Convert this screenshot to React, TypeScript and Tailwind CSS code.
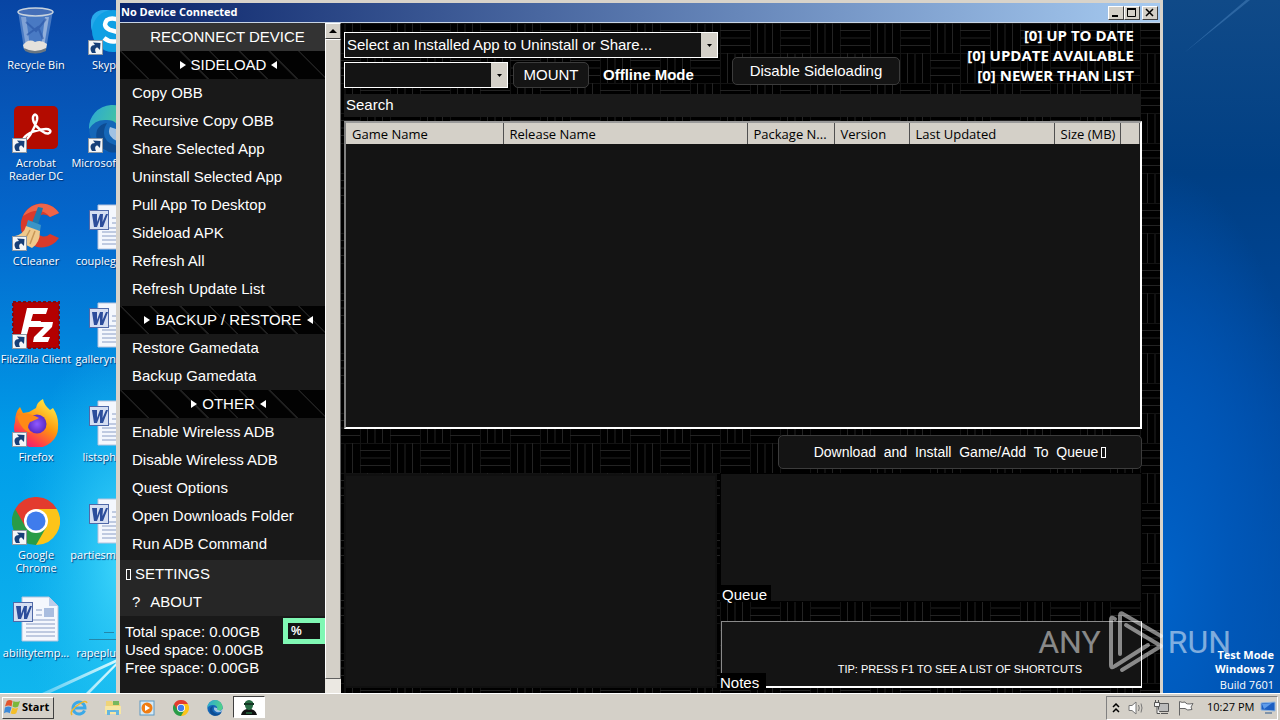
import type { ReactNode } from "react";

const ui = "font-['Liberation_Sans',Arial,sans-serif]";
const tahoma = "font-['Open_Sans','Noto_Sans',sans-serif]";

function Shortcut() {
  return (
    <g>
      <rect x="0.5" y="33.5" width="14" height="14" fill="#f4f6f8" stroke="#8d97a3" />
      <path d="M4 46 C1 41 3 38 7 38 L5 35.500 L12.500 36 L12 43 L9.500 40.500 C7 40.500 6.500 43 8 46 Z" fill="#173f78" />
    </g>
  );
}

function RecycleBin() {
  return (
    <svg viewBox="0 0 48 48" className="h-12 w-12 shrink-0">
      <path d="M6 4 L12 42 Q24 48 34 42 L41 4 Z" fill="#7fa3d8" fillOpacity="0.55" />
      <path d="M9 10 L14 40 L18 40 L14 10 Z" fill="#fff" fillOpacity="0.3" />
      <path d="M37 10 L32 40 L29 41 L33 10 Z" fill="#fff" fillOpacity="0.4" />
      <path d="M14 15 L24 24 L34 12 M15 28 L26 20 L31 32" stroke="#2853a5" strokeWidth="2" fill="none" opacity="0.6" />
      <path d="M11 38 Q17 31 23 35 Q29 32 35 37 L34 42 Q24 48 12 42 Z" fill="#e5e1dc" />
      <path d="M12 41 Q23 47 34 41 L34 44 Q23 49 13 44 Z" fill="#697682" />
      <ellipse cx="23.500" cy="5" rx="17.500" ry="4" fill="#456fb8" stroke="#c8d3de" strokeWidth="1.500" />
    </svg>
  );
}

function Acrobat() {
  return (
    <svg viewBox="0 0 48 48" className="h-12 w-12 shrink-0">
      <rect x="2" y="1" width="44" height="43" rx="5" fill="#b30b00" />
      <path
        d="M12 33 C15 28 26 24 34 24 C41 24 39 30 33 28 C27 25 20 18 21 12 C22 8 26 9 25 15 C23 22 17 34 13 35 C11 36 11 34 12 33"
        fill="none"
        stroke="#fff"
        strokeWidth="2.500"
        strokeLinecap="round"
      />
      <Shortcut />
    </svg>
  );
}

function CCleaner() {
  return (
    <svg viewBox="0 0 48 48" className="h-12 w-12 shrink-0">
      <path d="M47 10 A21 22 0 1 0 47 35 L38 31 A10 11 0 1 1 38 14 Z" fill="#d93a2b" />
      <path d="M47 10 A21 22 0 0 0 11 13 Q28 2 38 14 Z" fill="#ee6549" />
      <path d="M26 4 L31 5 L26 22 L20 20 Z" fill="#1e78ad" />
      <path d="M16 17 L29 22 L28 28 L14 24 Z" fill="#3a94c7" />
      <path d="M14 23 L28 28 Q28 40 20 45 Q9 40 3 33 Q12 31 14 23 Z" fill="#efc98c" />
      <path d="M18 27 L12 38 M23 28 L18 41" stroke="#c89757" strokeWidth="1.500" />
      <Shortcut />
    </svg>
  );
}

function FileZilla() {
  return (
    <svg viewBox="0 0 48 48" className="h-12 w-12 shrink-0">
      <rect x="1" y="1" width="46" height="46" fill="#b40000" stroke="#7c0b16" strokeWidth="2" strokeDasharray="3 2" />
      <path d="M15 7 H36 L34 13 H21 L19 20 H29 L27 26 H17 L14 37 H8 Z" fill="#fff" />
      <path d="M26 21 H41 L40 26 L30 36 H38 L36 41 H21 L22 36 L32 26 H25 Z" fill="#fff" />
      <Shortcut />
    </svg>
  );
}

function Firefox() {
  return (
    <svg viewBox="0 0 48 48" className="h-12 w-12 shrink-0">
      <defs>
        <linearGradient id="fox" x1="0.8" y1="0" x2="0.2" y2="1">
          <stop offset="0" stopColor="#fff04a" />
          <stop offset="0.45" stopColor="#ff980e" />
          <stop offset="0.8" stopColor="#ff3750" />
          <stop offset="1" stopColor="#e31587" />
        </linearGradient>
        <radialGradient id="globe">
          <stop offset="0" stopColor="#9059ff" />
          <stop offset="1" stopColor="#5b2bc4" />
        </radialGradient>
      </defs>
      <path d="M8 8 L11 14 L17 13 L24 9 Q25 3 31 0 Q32 6 38 11 L41 9 Q47 18 46 28 A22 20 0 1 1 3 23 Q3 13 8 8 Z" fill="url(#fox)" />
      <circle cx="25" cy="25" r="9.500" fill="url(#globe)" />
      <path d="M5 17 Q13 12 23 17 L27 19 Q21 22 18 23 Q13 30 20 34 Q9 32 5 17 Z" fill="#ff8a16" />
      <Shortcut />
    </svg>
  );
}

function ChromeWheel() {
  return (
    <g>
      <path d="M24 24 L3.200 12 A24 24 0 0 1 44.800 12 Z" fill="#e33b2e" />
      <path d="M24 24 L44.800 12 A24 24 0 0 1 24 48 Z" fill="#fcc419" />
      <path d="M24 24 L24 48 A24 24 0 0 1 3.200 12 Z" fill="#299c47" />
      <path d="M24 12 H44.800 L35 30 Z" fill="#fcc419" />
      <path d="M34.400 30 L24 48 L14 30 Z" fill="#299c47" />
      <path d="M13.600 30 L3.200 12 L24 12 Z" fill="#e33b2e" />
      <circle cx="24" cy="24" r="12" fill="#fff" />
      <circle cx="24" cy="24" r="9.500" fill="#3f7cec" />
    </g>
  );
}

function Chrome() {
  return (
    <svg viewBox="0 0 48 48" className="h-12 w-12 shrink-0">
      <ChromeWheel />
      <Shortcut />
    </svg>
  );
}

function WordDoc() {
  return (
    <svg viewBox="0 0 48 48" className="h-12 w-12 shrink-0">
      <path d="M10 2 H37 L46 11 V46 H10 Z" fill="#f4f7fd" stroke="#b6c3dc" />
      <path d="M37 2 V11 H46 Z" fill="#bccdea" />
      <path d="M24 15 H30 M24 20 H30 M14 25 H43 M14 29 H43 M14 33 H43 M14 37 H43 M14 41 H43" stroke="#8a9dc4" />
      <rect x="32" y="13" width="10" height="9" fill="#a9bddf" />
      <rect x="1.500" y="7.500" width="19" height="19" fill="#d5def2" stroke="#5069a8" />
      <path d="M4 11 H9 L9 19 L12 11 H15 L14.500 19 L18 11 H20 L15 24 H12 L12 16 L9 24 H6 Z" fill="#2c4d9b" />
    </svg>
  );
}

function Skype() {
  return (
    <svg viewBox="0 0 48 48" className="h-12 w-12 shrink-0">
      <rect x="3" y="3" width="28" height="28" rx="12" fill="#28a8ea" />
      <circle cx="25" cy="24" r="21" fill="#0fa0e4" />
      <path d="M34 15 Q25 9 19 13 Q14 19 22 23 L29 25 Q37 30 29 34 Q22 36 16 31" fill="none" stroke="#fff" strokeWidth="4.500" />
      <Shortcut />
    </svg>
  );
}

function EdgeWave() {
  return (
    <g>
      <defs>
        <linearGradient id="edge" x1="0" y1="0" x2="1" y2="0.3">
          <stop offset="0" stopColor="#2aa6d8" />
          <stop offset="1" stopColor="#4fd08c" />
        </linearGradient>
      </defs>
      <circle cx="24" cy="24" r="23" fill="#1567b8" />
      <path d="M1 24 A23 23 0 0 1 47 22 Q47 32 36 32 Q28 31 31 26 Q30 15 19 15 Q7 14 1 24 Z" fill="url(#edge)" />
      <path d="M17 22 Q12 37 30 41 Q39 42 44 36 Q36 50 21 47 Q5 40 9 25 Q12 19 19 18 Z" fill="#0d4c93" />
      <path d="M22 22 Q18 31 29 36 Q38 38 45 34 L48 27 L40 32 Q27 31 31 25 Z" fill="#fff" fillOpacity="0.6" />
    </g>
  );
}

function Edge() {
  return (
    <svg viewBox="0 0 48 48" className="h-12 w-12 shrink-0">
      <EdgeWave />
      <Shortcut />
    </svg>
  );
}

function Blank() {
  return (
    <svg viewBox="0 0 48 48" className="h-12 w-12 shrink-0">
      <path d="M1 44.500 H47 M16 37.500 H26" stroke="#2387aa" />
    </svg>
  );
}

const labelText = "mt-[3px] text-[11px] leading-[13px] text-white [text-shadow:1px_1px_1px_#003070]";

function DesktopIcon({ icon, label }: { icon: ReactNode; label: string }) {
  return (
    <button className="flex h-[98px] w-[72px] flex-col items-center">
      {icon}
      <span className={`w-full text-center whitespace-pre-line ${labelText}`}>{label}</span>
    </button>
  );
}

/* Icons that run under the window: only their left part is on view. */
function CoveredIcon({ icon, label }: { icon: ReactNode; label: string }) {
  return (
    <button className="flex h-[98px] w-full flex-col items-end">
      <span className="flex h-12 w-7 overflow-hidden">{icon}</span>
      <span className={`whitespace-nowrap ${labelText}`}>{label}</span>
    </button>
  );
}

function Wallpaper() {
  return (
    <div className="absolute inset-0 bg-[linear-gradient(180deg,#0845a4_0%,#0467cc_32%,#009de9_64%,#10b6ee_100%)]">
      <div className="absolute inset-y-0 right-0 w-[120px] bg-[radial-gradient(ellipse_160px_420px_at_0%_85%,#0062c8_0%,#0057b8_45%,transparent_100%),linear-gradient(180deg,#104a88_0%,#003f84_25%,#0049a0_60%,#0052ae_100%)]" />
      <svg className="absolute inset-0 h-full w-full" viewBox="0 0 1280 692" preserveAspectRatio="none">
        <defs>
          <radialGradient id="glow">
            <stop offset="0" stopColor="#4be0ff" stopOpacity="0.85" />
            <stop offset="1" stopColor="#1dbdf0" stopOpacity="0" />
          </radialGradient>
          <linearGradient id="ray">
            <stop offset="0" stopColor="#fff" stopOpacity="0.3" />
            <stop offset="1" stopColor="#eaffff" stopOpacity="0.9" />
          </linearGradient>
        </defs>
        <ellipse cx="125" cy="560" rx="110" ry="230" fill="url(#glow)" />
        <path d="M42 692 L117 658 V661 L50 692 Z M86 692 L117 661 V664 L90 692 Z" fill="url(#ray)" />
        <path d="M1184 53 L1246 0 H1250 Z" fill="#5b93cc" fillOpacity="0.4" />
      </svg>
    </div>
  );
}

function Weave() {
  return (
    <svg className="absolute inset-0 h-full w-full" aria-hidden="true">
      <defs>
        <pattern id="weave" x="19" y="0" width="60" height="60" patternUnits="userSpaceOnUse">
          <rect width="60" height="60" fill="#000" />
          <path d="M0 .5 H60 M0 30.500 H60 M.5 0 V60 M30.500 0 V60" stroke="#131313" />
          <path
            d="M0 7.500 H30 M0 22.500 H30 M37.500 0 V30 M52.500 0 V30 M30 37.500 H60 M30 52.500 H60 M7.500 30 V60 M22.500 30 V60"
            stroke="#232323"
          />
          <path d="M0 15 H30 M45 0 V30 M30 45 H60 M15 30 V60" stroke="#111" strokeWidth="2" />
        </pattern>
      </defs>
      <rect width="100%" height="100%" fill="url(#weave)" />
    </svg>
  );
}

const caption =
  "flex h-[14px] w-4 items-center justify-center border border-t-white border-l-white border-r-[#404040] border-b-[#404040] bg-[#d4d0c8]";

function TitleBar() {
  return (
    <header
      className={`flex h-[19px] shrink-0 items-center bg-[linear-gradient(90deg,#0a246a,#a6caf0)] pr-[2px] pl-[1px] ${tahoma}`}
    >
      <h1 className="text-[11px] font-bold text-white">No Device Connected</h1>
      <div className="ml-auto flex">
        <button className={caption} aria-label="Minimize">
          <svg viewBox="0 0 12 10" className="h-[10px] w-3">
            <path d="M2 8 H8" stroke="#000" strokeWidth="2" />
          </svg>
        </button>
        <button className={caption} aria-label="Maximize">
          <svg viewBox="0 0 12 10" className="h-[10px] w-3">
            <path d="M1.500 1 V8.500 H9.500 V1" stroke="#000" fill="none" />
            <path d="M1 1 H10" stroke="#000" strokeWidth="2" />
          </svg>
        </button>
        <button className={`${caption} ml-[2px]`} aria-label="Close">
          <svg viewBox="0 0 12 10" className="h-[10px] w-3">
            <path d="M2 1 L9 8 M9 1 L2 8" stroke="#000" strokeWidth="1.500" />
          </svg>
        </button>
      </div>
    </header>
  );
}

function Section({ title }: { title: string }) {
  return (
    <h2 className="flex h-7 items-center justify-center gap-1 bg-[repeating-linear-gradient(45deg,#020202_0px,#020202_19px,#202020_20px,#202020_21px)] pl-3 text-[15px] text-white">
      <svg viewBox="0 0 8 8" className="h-2 w-2"><path d="M1 0 L7 4 L1 8 Z" fill="#fff" /></svg>
      {title}
      <svg viewBox="0 0 8 8" className="h-2 w-2"><path d="M7 0 L1 4 L7 8 Z" fill="#fff" /></svg>
    </h2>
  );
}

function Items({ items }: { items: string[] }) {
  return (
    <ul>
      {items.map((t) => (
        <li key={t}>
          <button className="flex h-7 w-full items-center pt-[1px] pl-3 text-[15px] whitespace-pre text-white">{t}</button>
        </li>
      ))}
    </ul>
  );
}

function Sidebar() {
  return (
    <nav className="w-[205px] shrink-0 bg-[#191919]">
      <button className="h-7 w-full bg-[#333] pl-[10px] text-[15px] text-white">RECONNECT DEVICE</button>
      <Section title="SIDELOAD" />
      <Items
        items={[
          "Copy OBB",
          "Recursive Copy OBB",
          "Share Selected App",
          "Uninstall Selected App",
          "Pull App To Desktop",
          "Sideload APK",
          "Refresh All",
          "Refresh Update List",
        ]}
      />
      <div className="mt-[3px]"><Section title="BACKUP / RESTORE" /></div>
      <Items items={["Restore Gamedata", "Backup Gamedata"]} />
      <Section title="OTHER" />
      <Items
        items={["Enable Wireless ADB", "Disable Wireless ADB", "Quest Options", "Open Downloads Folder", "Run ADB Command"]}
      />
      <div className="mt-[2px] bg-[#262626] text-[15px] text-white">
        <button className="flex h-7 w-full items-center gap-1 pt-[1px] pl-[6px]">
          <span className="h-[11px] w-[5px] border border-white" />
          SETTINGS
        </button>
        <button className="flex h-7 w-full items-center gap-[10px] pt-[1px] pl-3">
          <span>?</span>ABOUT
        </button>
      </div>
      <div className="flex justify-between pt-[2px] text-[15px] leading-[18px] text-white">
        <div className="pt-[5px] pl-[5px]">
          <p>Total space: 0.00GB</p>
          <p>Used space: 0.00GB</p>
          <p>Free space: 0.00GB</p>
        </div>
        <div className="h-[26px] w-[42px] border-[5px] border-[#80f8b4] bg-[#141414] pl-[3px] text-[12px] leading-4 font-bold">
          %
        </div>
      </div>
    </nav>
  );
}

function ScrollBar() {
  return (
    <div className="flex w-4 shrink-0 flex-col bg-[#ebe8e2]">
      <button
        aria-label="Scroll up"
        className="flex h-4 items-center justify-center border border-t-white border-l-white border-r-[#404040] border-b-[#404040] bg-[#d4d0c8]"
      >
        <svg viewBox="0 0 8 4" className="h-1 w-2"><path d="M4 0 L8 4 H0 Z" fill="#000" /></svg>
      </button>
      <div className="flex-1 border border-t-white border-l-white border-r-[#606060] border-b-[#606060] bg-[#d4d0c8]" />
      <div className="h-[14px]" />
    </div>
  );
}

function Combo({ label, value }: { label: string; value: string }) {
  return (
    <div className="relative h-[26px] min-w-0 flex-1 border border-white bg-[#141414]">
      <select aria-label={label} className="h-full w-full appearance-none bg-transparent pl-[2px] text-[15px] text-white outline-none">
        <option>{value}</option>
      </select>
      <span className="pointer-events-none absolute inset-y-0 right-0 flex w-4 items-center justify-center bg-[#d4d0c8]">
        <svg viewBox="0 0 5 3" className="h-[3px] w-[5px]"><path d="M0 0 H5 L2.500 3 Z" fill="#000" /></svg>
      </span>
    </div>
  );
}

const darkButton = "rounded-[5px] border border-[#3c3c3c] bg-[#141414] text-white";

const columns: [string, string][] = [
  ["Game Name", "w-[157px]"],
  ["Release Name", "w-[244px]"],
  ["Package N...", "w-[87px]"],
  ["Version", "w-[75px]"],
  ["Last Updated", "w-[145px]"],
  ["Size (MB)", "w-[66px]"],
  ["", ""],
];

function GameList() {
  return (
    <div className="mt-1 min-h-[100px] flex-1 border-2 border-t-[#9a9a9a] border-l-[#808080] border-r-white border-b-white bg-[#141414]">
      <table className={`w-full table-fixed border-collapse text-[13px] leading-5 text-black ${tahoma}`}>
        <thead>
          <tr>
            {columns.map(([name, width], i) => (
              <th
                key={i}
                className={`h-5 overflow-hidden border-r border-r-[#505050] bg-[#d4d0c8] pt-[1px] pb-0 pl-[6px] text-left font-normal whitespace-nowrap ${width}`}
              >
                {name}
              </th>
            ))}
          </tr>
        </thead>
      </table>
    </div>
  );
}

function Main() {
  return (
    <main className="relative min-w-0 flex-1">
      <Weave />
      <div className="relative flex h-full flex-col pt-[2px] pr-[18px] pb-[5px] pl-[3px]">
        <div className="flex h-[69px] shrink-0 items-start">
          <div className="flex w-[374px] flex-col gap-1 pt-[7px]">
            <div className="flex"><Combo label="Installed app" value="Select an Installed App to Uninstall or Share..." /></div>
            <div className="flex items-center">
              <div className="flex w-[164px]"><Combo label="Device" value="" /></div>
              <button className={`${darkButton} ml-[5px] h-[26px] w-[76px] text-[15px]`}>MOUNT</button>
              <p className="ml-[14px] text-[15px] font-bold whitespace-nowrap text-white">Offline Mode</p>
            </div>
          </div>
          <button className={`${darkButton} mt-8 ml-[14px] h-7 w-[168px] text-[15px] whitespace-nowrap`}>Disable Sideloading</button>
          <div className={`ml-auto pr-2 text-right text-[15px] leading-[20px] font-bold text-white ${tahoma}`}>
            <p>[0] UP TO DATE</p>
            <p>[0] UPDATE AVAILABLE</p>
            <p>[0] NEWER THAN LIST</p>
          </div>
        </div>
        <input
          aria-label="Search"
          placeholder="Search"
          className="mr-[1px] h-[23px] shrink-0 bg-[#191919] pb-[2px] pl-[2px] text-[15px] text-white outline-none placeholder:text-white"
        />
        <GameList />
        <button
          className={`${darkButton} mt-[6px] flex h-[34px] w-[364px] shrink-0 items-center justify-center gap-[3px] self-end text-[14px] whitespace-pre`}
        >
          Download  and  Install  Game/Add  To  Queue
          <span className="h-[11px] w-[5px] border border-white" />
        </button>
        <div className="mt-[5px] flex h-[214px] shrink-0 gap-1">
          <div className="w-[373px] border-2 border-[#101010] bg-[#141414]" />
          <div className="flex min-w-0 flex-1 flex-col">
            <section className="relative mr-[1px] h-[127px] bg-[#141414] ring-1 ring-black">
              <h2 className="absolute bottom-0 left-0 h-4 w-[50px] bg-black pl-[1px] text-[15px] leading-5 text-white">Queue</h2>
            </section>
            <section className="relative mt-5 flex-1 border border-t-[#8a8a8a] border-l-[#8a8a8a] border-r-white border-b-2 border-b-white bg-[#141414]">
              <p className="absolute right-[59px] bottom-2 text-[11px] leading-[18px] whitespace-nowrap text-white">
                TIP: PRESS F1 TO SEE A LIST OF SHORTCUTS
              </p>
              <h2 className="absolute -bottom-[4px] -left-[2px] h-[17px] w-[46px] bg-black text-[15px] leading-5 text-white">Notes</h2>
            </section>
          </div>
        </div>
      </div>
    </main>
  );
}

function Watermark() {
  return (
    <div className="pointer-events-none absolute right-[49px] bottom-5 flex items-center font-['Liberation_Sans_Narrow',Roboto,sans-serif] text-[32px] leading-[62px] text-white/50">
      <span>ANY</span>
      <svg
        viewBox="0 0 56 62"
        className="mr-1 ml-[7px] h-[62px] w-14"
        fill="none"
        stroke="#fff"
        strokeOpacity="0.5"
        strokeWidth="4"
        strokeLinejoin="round"
        strokeLinecap="round"
      >
        <path d="M7 8 Q3 5 3 9 V54 Q3 58 7 55 L40 34" />
        <path d="M53 25 L15 3 Q12 1 12 5 V43" />
        <path d="M18 14 L53 35 L14 59" />
      </svg>
      <span>RUN</span>
    </div>
  );
}

function StartFlag() {
  return (
    <svg viewBox="0 0 18 18" className="h-[17px] w-[17px]">
      <path d="M3 2 Q6 0 9 2 L8 8 Q5 6 1 8 Z" fill="#e2552d" />
      <path d="M10 2 Q13 4 17 2 L15 8 Q12 10 9 8 Z" fill="#7bb83c" />
      <path d="M1 9 Q5 7 8 9 L6 15 Q3 13 0 15 Z" fill="#3d8ad8" />
      <path d="M9 9 Q12 11 15 9 L13 15 Q10 17 7 15 Z" fill="#f4bf2a" />
    </svg>
  );
}

const quick = "flex h-6 w-[34px] items-center justify-center";

function TaskBar() {
  return (
    <footer className={`relative flex h-7 shrink-0 items-center border-t border-white bg-[#d4d0c8] pr-[2px] pl-[2px] ${tahoma}`}>
      <button className="flex h-[22px] w-[52px] items-center gap-[1px] border border-t-white border-l-white border-r-[#404040] border-b-[#404040] pl-[1px] text-[11px] font-bold text-black">
        <StartFlag />
        Start
      </button>
      <div className="ml-2 flex">
        <button className={quick} aria-label="Internet Explorer">
          <svg viewBox="0 0 18 18" className="h-[18px] w-[18px]">
            <path d="M14.500 11.500 A6 6 0 1 1 15 9 H5" fill="none" stroke="#3ba9e8" strokeWidth="3" />
            <path d="M2 16 Q-1 12 8 6 Q16 0 17 4" fill="none" stroke="#efb82c" strokeWidth="1.500" />
          </svg>
        </button>
        <button className={quick} aria-label="File Explorer">
          <svg viewBox="0 0 18 18" className="h-[18px] w-[18px]">
            <path d="M2 2 H8 L9 4 H16 V14 H2 Z" fill="#efd477" />
            <rect x="9" y="2" width="6" height="4" fill="#77b85d" />
            <path d="M1 7 H17 V15 H1 Z" fill="#f7e6a3" />
            <path d="M3 16 V11 H15 V16 H12 V13 H6 V16 Z" fill="#65b6df" />
          </svg>
        </button>
        <button className={quick} aria-label="Media Player">
          <svg viewBox="0 0 18 18" className="h-[18px] w-[18px]">
            <rect x="2" y="2" width="14" height="14" fill="#d6e9f5" stroke="#5b98c4" />
            <circle cx="9" cy="9" r="5.500" fill="#f07d13" />
            <path d="M7 6 L12 9 L7 12 Z" fill="#fff" />
          </svg>
        </button>
        <button className={quick} aria-label="Chrome">
          <svg viewBox="0 0 48 48" className="h-4 w-4"><ChromeWheel /></svg>
        </button>
        <button className={quick} aria-label="Edge">
          <svg viewBox="0 0 48 48" className="h-4 w-4"><EdgeWave /></svg>
        </button>
        <button
          aria-label="No Device Connected"
          className="ml-[1px] flex h-[22px] w-8 items-center justify-center border border-t-[#404040] border-l-[#404040] border-r-white border-b-white bg-white"
        >
          <svg viewBox="0 0 18 18" className="h-[18px] w-[18px]">
            <path d="M1 17 Q2 12 7 11 H11 Q16 12 17 17 Z" fill="#111" />
            <path d="M5 4 Q9 0 13 4 V8 Q12 12 9 12 Q6 12 5 8 Z" fill="#286c44" />
            <path d="M4 5 H14 V7 H4 Z" fill="#163726" />
            <path d="M6 15 H12" stroke="#2e9857" />
          </svg>
        </button>
      </div>
      <div className="ml-auto flex h-6 w-[172px] items-center border border-t-[#808080] border-l-[#808080] border-r-white border-b-white pl-[5px]">
        <svg viewBox="0 0 8 10" className="h-[10px] w-2">
          <path d="M1 4 L4 1 L7 4 M1 9 L4 6 L7 9" fill="none" stroke="#000" strokeWidth="1.500" />
        </svg>
        <svg viewBox="0 0 18 16" className="ml-2 h-4 w-[18px]" fill="#fff" stroke="#777">
          <path d="M1 5.500 H4 L8 2 V14 L4 10.500 H1 Z" />
          <path d="M10.500 5 Q12 8 10.500 11 M13 3.500 Q15 8 13 12.500" fill="none" />
        </svg>
        <svg viewBox="0 0 18 16" className="ml-[7px] h-4 w-[18px]" fill="#f4f4f4" stroke="#555">
          <path d="M5.500 3.500 H15.500 V11.500 H5.500 Z M8 13.500 H15" fill="#bbb" />
          <path d="M1.500 2.500 H6.500 V6.500 H1.500 Z M4 6.500 V13.500 H7 M2.500 0 V2.500 M5.500 0 V2.500" />
        </svg>
        <svg viewBox="0 0 18 16" className="ml-[6px] h-4 w-[18px]" fill="#fff" stroke="#666">
          <path d="M2.500 15.500 V1.500 Q5 3 8 2 Q9 5 16 3.500 L14 7 L15 9.500 Q10 11 8 8.500 H2.500" />
        </svg>
        <time className="ml-3 text-[11px] whitespace-nowrap text-black">10:27 PM</time>
        <svg viewBox="0 0 16 14" className="mr-[1px] ml-auto h-[14px] w-4">
          <path d="M1 2 L15 1 V10 L1 9 Z" fill="#1c5fc2" stroke="#8fb4de" />
          <path d="M2 3 L12 2 L4 8 Z" fill="#5e9cea" />
          <path d="M5 12 H12" stroke="#7f93a9" strokeWidth="2" />
        </svg>
      </div>
    </footer>
  );
}

export default function App() {
  return (
    <div className={`relative flex min-h-screen flex-col overflow-hidden ${ui}`}>
      <div className="relative min-h-[692px] flex-1 overflow-hidden">
        <Wallpaper />
        <div className={`relative flex w-[116px] pt-[7px] ${tahoma}`}>
          <div className="shrink-0">
            <DesktopIcon icon={<RecycleBin />} label="Recycle Bin" />
            <DesktopIcon icon={<Acrobat />} label={"Acrobat\nReader DC"} />
            <DesktopIcon icon={<CCleaner />} label="CCleaner" />
            <DesktopIcon icon={<FileZilla />} label="FileZilla Client" />
            <DesktopIcon icon={<Firefox />} label="Firefox" />
            <DesktopIcon icon={<Chrome />} label={"Google\nChrome"} />
            <DesktopIcon icon={<WordDoc />} label="abilitytemp..." />
          </div>
          <div className="min-w-0 flex-1">
            <CoveredIcon icon={<Skype />} label="Skyp" />
            <CoveredIcon icon={<Edge />} label="Microsof" />
            <CoveredIcon icon={<WordDoc />} label="coupleg" />
            <CoveredIcon icon={<WordDoc />} label="galleryn" />
            <CoveredIcon icon={<WordDoc />} label="listsph" />
            <CoveredIcon icon={<WordDoc />} label="partiesm" />
            <CoveredIcon icon={<Blank />} label="rapeplu" />
          </div>
        </div>
        <div className={`absolute right-[6px] bottom-[1px] text-right text-[11px] leading-[14px] text-white ${tahoma}`}>
          <p className="font-bold">Test Mode</p>
          <p className="font-bold">Windows 7</p>
          <p className="pt-[2px]">Build 7601</p>
        </div>
        <div className="absolute top-0 right-[117px] bottom-0 left-[116px] flex flex-col border-t-[3px] border-r-[3px] border-l-4 border-[#d8d3ca]">
          <TitleBar />
          <div className="flex min-h-0 flex-1 border-t border-[#c8d4e4]">
            <Sidebar />
            <ScrollBar />
            <Main />
          </div>
        </div>
        <Watermark />
      </div>
      <TaskBar />
    </div>
  );
}
